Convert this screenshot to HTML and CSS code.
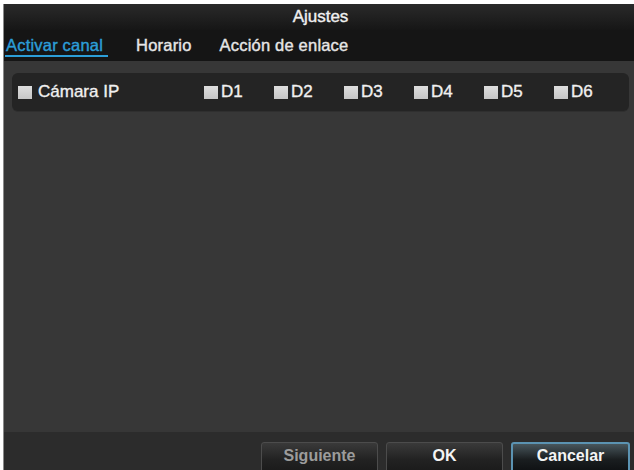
FILE: index.html
```html
<!DOCTYPE html>
<html lang="es">
<head>
<meta charset="utf-8">
<title>Ajustes</title>
<link rel="stylesheet" href="styles.css">
</head>
<body>
<div class="frame">
  <div class="titlebar">Ajustes</div>
  <div class="tabs">
    <span class="tab active">Activar canal</span>
    <span class="tab">Horario</span>
    <span class="tab">Acción de enlace</span>
  </div>
  <div class="content">
    <div class="row">
      <label class="check main"><span class="box"></span>Cámara IP</label>
      <div class="channels">
        <label class="check"><span class="box"></span>D1</label>
        <label class="check"><span class="box"></span>D2</label>
        <label class="check"><span class="box"></span>D3</label>
        <label class="check"><span class="box"></span>D4</label>
        <label class="check"><span class="box"></span>D5</label>
        <label class="check"><span class="box"></span>D6</label>
      </div>
    </div>
  </div>
  <div class="footer">
    <button class="btn disabled">Siguiente</button>
    <button class="btn">OK</button>
    <button class="btn focus">Cancelar</button>
  </div>
</div>
</body>
</html>
```

FILE: styles.css
```css
html, body {
  margin: 0;
  padding: 0;
  background: #ffffff;
  overflow: hidden;
}
body {
  font-family: "Liberation Sans", Arial, sans-serif;
  color: #f2f2f2;
}
.frame {
  margin: 4px 0 0 3px;
  width: 630px;
  height: 480px;
  border-left: 1px solid #8a8a8a;
  border-right: 1px solid #4e4e4e;
  display: flex;
  flex-direction: column;
  background: #373737;
}
.titlebar {
  height: 26px;
  flex: none;
  background: linear-gradient(#2a2a2a, #161616);
  display: flex;
  align-items: center;
  justify-content: center;
  font-size: 17px;
  -webkit-text-stroke: 0.4px #f0f0f0;
  color: #f0f0f0;
  padding-left: 3px;
}
.tabs {
  height: 31px;
  flex: none;
  background: #151515;
  display: flex;
  align-items: center;
  padding-left: 1px;
  font-size: 16.5px;
  letter-spacing: 0.2px;
  -webkit-text-stroke: 0.4px currentColor;
}
.tab {
  color: #e6e6e6;
  padding-bottom: 1px;
}
.tab + .tab {
  margin-left: 28px;
}
.tab.active {
  color: #2c9ed8;
  border-bottom: 2px solid #2c9ed8;
  padding: 0 5px 0 1px;
  margin-top: 2px;
}
.content {
  flex: none;
  height: 371px;
  background: #373737;
  padding: 12px 5px 0 8px;
  box-sizing: border-box;
}
.row {
  height: 38px;
  background: #242424;
  border-radius: 6px;
  display: flex;
  align-items: center;
  padding: 0 0 0 6px;
  box-shadow: 0 1px 0 #2f2f2f;
}
.check {
  display: flex;
  align-items: center;
  font-size: 17px;
  font-weight: normal;
  -webkit-text-stroke: 0.35px #f0f0f0;
  color: #f0f0f0;
  gap: 6px;
}
.box {
  width: 14px;
  height: 13px;
  background: linear-gradient(#dedede, #c6c6c6);
  display: inline-block;
}
.check.main {
  width: 186px;
}
.channels {
  display: flex;
  gap: 0;
}
.channels .check {
  width: 70px;
  gap: 3px;
}
.footer {
  flex: 1;
  background: #2c2c2c;
  display: flex;
  justify-content: flex-end;
  align-items: flex-start;
  padding: 10px 4px 0 0;
  gap: 8px;
}
.btn {
  width: 117px;
  height: 32px;
  border: 1px solid #4c4c4c;
  border-radius: 3px;
  background: linear-gradient(#3a3a3a, #222222 55%, #1a1a1a);
  color: #f4f4f4;
  font-family: "Liberation Sans", Arial, sans-serif;
  font-size: 16px;
  font-weight: bold;
  padding: 0 0 4px 0;
}
.btn.disabled {
  color: #9c9c9c;
}
.btn.focus {
  width: 119px;
  border: 2px solid #5b93b2;
  background: linear-gradient(#48565c, #1a1e20 55%, #0e1012);
}
```
